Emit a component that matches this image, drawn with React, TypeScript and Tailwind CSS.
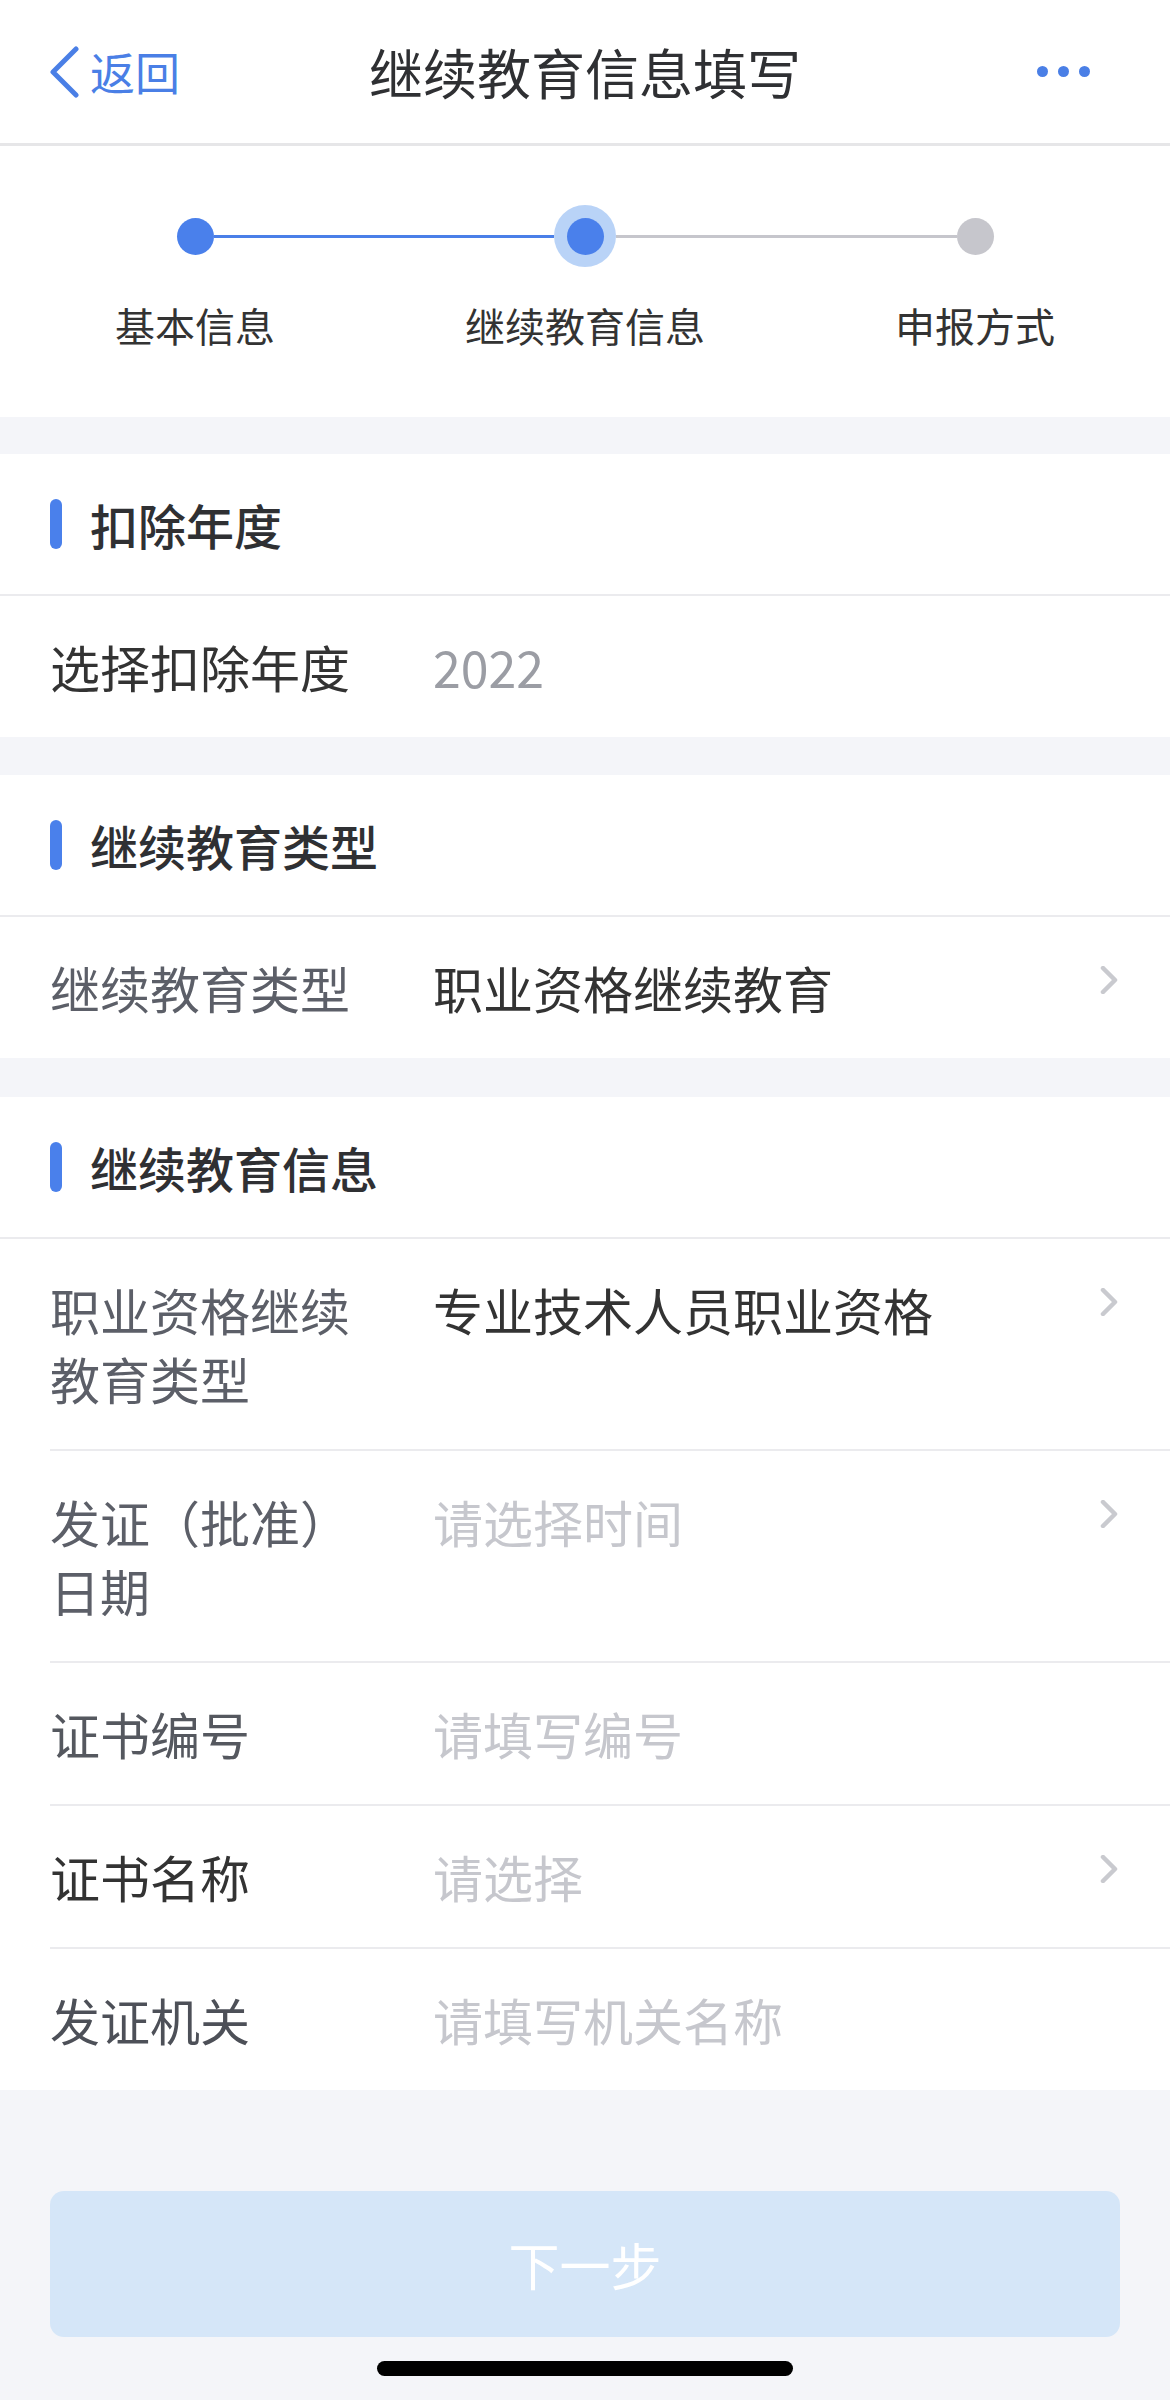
import React from "react";

type Row = {
    label: string;
    labelColor: string;
    value: string;
    valueColor: string;
    arrow?: boolean;
};

const steps = [
    { label: "基本信息", left: "", right: "bg-[#4a7fe8]", state: "done" },
    { label: "继续教育信息", left: "bg-[#4a7fe8]", right: "bg-[#c6c6cc]", state: "active" },
    { label: "申报方式", left: "bg-[#c6c6cc]", right: "", state: "todo" },
];

// 행 오른쪽 화살표
const Chevron = () => (
    <svg width="18" height="28" viewBox="0 0 18 28" className="shrink-0 mt-[13px]">
        <path d="M3 2 L15 14 L3 26" fill="none" stroke="#c9cacf" strokeWidth="4.5" strokeLinecap="round" strokeLinejoin="round" />
    </svg>
);

const SectionHeader = ({ title }: { title: string }) => (
    <div className="h-[142px] bg-white border-b-2 border-[#ebebee] flex items-center pl-[50px]">
        <div className="w-[12px] h-[50px] rounded-full bg-[#4a80eb]" />
        <span className="ml-[28px] text-[48px] font-medium text-[#2f3033] leading-none">{title}</span>
    </div>
);

const FormRow = ({ row, divider }: { row: Row; divider: boolean }) => (
    <div className={`ml-[50px] flex items-start py-[36px] pr-[52px] ${divider ? "border-b-2 border-[#ebebee]" : ""}`}>
        <div className={`w-[320px] shrink-0 text-[50px] leading-[69px] ${row.labelColor}`}>{row.label}</div>
        <div className={`ml-[63px] flex-1 text-[50px] leading-[69px] ${row.valueColor}`}>{row.value}</div>
        {row.arrow && <Chevron />}
    </div>
);

const Band = ({ h }: { h: string }) => <div className={`${h} bg-[#f4f5f9]`} />;

const infoRows: Row[] = [
    { label: "职业资格继续教育类型", labelColor: "text-[#5c5f68]", value: "专业技术人员职业资格", valueColor: "text-[#333333]", arrow: true },
    { label: "发证（批准）日期", labelColor: "text-[#5c5f68]", value: "请选择时间", valueColor: "text-[#c6c7cd]", arrow: true },
    { label: "证书编号", labelColor: "text-[#55585f]", value: "请填写编号", valueColor: "text-[#c6c7cd]" },
    { label: "证书名称", labelColor: "text-[#333333]", value: "请选择", valueColor: "text-[#c6c7cd]", arrow: true },
    { label: "发证机关", labelColor: "text-[#4d5058]", value: "请填写机关名称", valueColor: "text-[#c6c7cd]" },
];

export default function App() {
    return (
        <div className="w-[1170px] min-h-[2400px] bg-[#f4f5f9] font-['Noto_Sans_CJK_SC',sans-serif]">
            {/* 상단 네비게이션 */}
            <div className="h-[146px] bg-white border-b-[3px] border-[#e6e6e8] grid grid-cols-[1fr_auto_1fr] items-center">
                <div className="flex items-center pl-[48px]">
                    <svg width="32" height="52" viewBox="0 0 32 52">
                        <path d="M28 3 L5 26 L28 49" fill="none" stroke="#4a7fe6" strokeWidth="5" strokeLinecap="round" strokeLinejoin="round" />
                    </svg>
                    <span className="ml-[10px] text-[45px] text-[#4a7fe6] leading-none">返回</span>
                </div>
                <div className="text-[54px] text-[#2f3033] leading-none">继续教育信息填写</div>
                <div className="flex justify-end items-center gap-[10px] pr-[80px]">
                    <div className="w-[11px] h-[11px] rounded-full bg-[#4a7fe6]" />
                    <div className="w-[11px] h-[11px] rounded-full bg-[#4a7fe6]" />
                    <div className="w-[11px] h-[11px] rounded-full bg-[#4a7fe6]" />
                </div>
            </div>

            {/* 단계 표시 */}
            <div className="h-[271px] bg-white grid grid-cols-3 pt-[59px]">
                {steps.map((s) => (
                    <div key={s.label} className="flex flex-col items-center">
                        <div className="flex items-center h-[62px] w-full">
                            <div className={`flex-1 h-[3px] ${s.left}`} />
                            {s.state === "active" ? (
                                <div className="w-[62px] h-[62px] rounded-full bg-[#b9d3f7] flex items-center justify-center">
                                    <div className="w-[37px] h-[37px] rounded-full bg-[#4a80eb]" />
                                </div>
                            ) : (
                                <div className={`w-[37px] h-[37px] rounded-full ${s.state === "done" ? "bg-[#4a80eb]" : "bg-[#c6c6cc]"}`} />
                            )}
                            <div className={`flex-1 h-[3px] ${s.right}`} />
                        </div>
                        <div className="mt-[30px] text-[40px] leading-[56px] text-[#333333]">{s.label}</div>
                    </div>
                ))}
            </div>

            <Band h="h-[37px]" />
            <div className="bg-white">
                <SectionHeader title="扣除年度" />
                <FormRow
                    row={{ label: "选择扣除年度", labelColor: "text-[#333333]", value: "2022", valueColor: "text-[#9b9da4]" }}
                    divider={false}
                />
            </div>

            <Band h="h-[38px]" />
            <div className="bg-white">
                <SectionHeader title="继续教育类型" />
                <FormRow
                    row={{ label: "继续教育类型", labelColor: "text-[#5c5f68]", value: "职业资格继续教育", valueColor: "text-[#333333]", arrow: true }}
                    divider={false}
                />
            </div>

            <Band h="h-[39px]" />
            <div className="bg-white">
                <SectionHeader title="继续教育信息" />
                {infoRows.map((r, i) => (
                    <FormRow key={r.label} row={r} divider={i < infoRows.length - 1} />
                ))}
            </div>

            {/* 다음 단계 버튼 */}
            <div className="mx-[50px] mt-[101px] h-[146px] rounded-[14px] bg-[#d5e6f8] flex items-center justify-center">
                <span className="text-[51px] text-white leading-none">下一步</span>
            </div>

            <div className="mt-[24px] mx-auto w-[416px] h-[15px] rounded-full bg-black" />
        </div>
    );
}
